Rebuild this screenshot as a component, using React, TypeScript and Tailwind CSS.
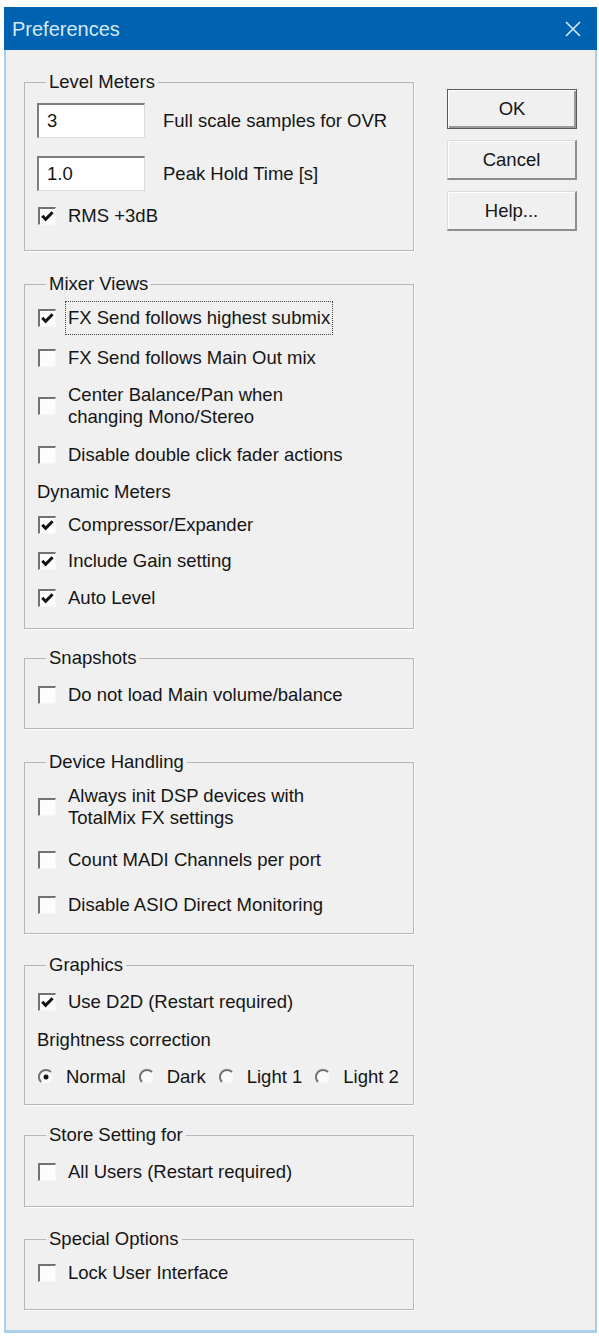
import React from "react";
import clsx from "clsx";

function CheckBox({ checked }: { checked?: boolean }) {
  return (
    <span className="relative inline-block w-[18px] h-[18px] shrink-0 border-t-2 border-l-2 border-t-[#727272] border-l-[#727272] border-r border-b border-r-[#f6f6f6] border-b-[#f6f6f6] bg-[#fcfcfc]">
      {checked && (
        <svg viewBox="0 0 15 15" className="absolute inset-0 w-full h-full">
          <path d="M2.3 6.8 L5.6 10.4 L12.6 3.2" stroke="#111" strokeWidth="3" fill="none" />
        </svg>
      )}
    </span>
  );
}

function Check({
  label,
  checked,
  focus,
  className,
}: {
  label: React.ReactNode;
  checked?: boolean;
  focus?: boolean;
  className?: string;
}) {
  return (
    <div className={clsx("flex items-center gap-[12px] pl-[1px] h-[32px]", className)}>
      <CheckBox checked={checked} />
      <span className={clsx(focus && "outline-1 outline-dotted outline-[#444] outline-offset-[2px]")}>{label}</span>
    </div>
  );
}

function Radio({ label, selected }: { label: string; selected?: boolean }) {
  return (
    <div className="flex items-center gap-[11px]">
      <svg width="18" height="18" viewBox="0 0 18 18" className="shrink-0">
        <circle cx="9" cy="9" r="6.5" fill="#fafafa" />
        <path d="M14 4 A7 7 0 0 0 4 14" stroke="#727272" strokeWidth="2" fill="none" />
        {selected && <circle cx="9" cy="9" r="2.5" fill="#111" />}
      </svg>
      <span>{label}</span>
    </div>
  );
}

function Group({
  title,
  className,
  children,
}: {
  title: string;
  className?: string;
  children: React.ReactNode;
}) {
  return (
    <fieldset className={clsx("border border-[#b6b6b6] pl-[12px] pr-[8px] shadow-[1px_1px_0_#ffffff]", className)}>
      <legend className="ml-[9px] px-[3px] leading-[22px]">{title}</legend>
      {children}
    </fieldset>
  );
}

function Field({ value, label, className }: { value: string; label: string; className?: string }) {
  return (
    <div className={clsx("flex items-center gap-[18px]", className)}>
      <div className="w-[108px] h-[35px] flex items-center pl-[8px] bg-white border-t-2 border-l-2 border-t-[#7d7d7d] border-l-[#7d7d7d] border-r border-b border-r-[#dadada] border-b-[#dadada]">
        {value}
      </div>
      <span>{label}</span>
    </div>
  );
}

function Button({ children, primary }: { children: React.ReactNode; primary?: boolean }) {
  return (
    <button
      className={clsx(
        "w-[130px] h-[40px] bg-[#f0f0f0] flex items-center justify-center",
        primary
          ? "border border-[#5a5a5a] shadow-[inset_1px_1px_0_#ffffff,inset_-2px_-2px_0_#9a9a9a]"
          : "border-t border-l border-t-[#dcdcdc] border-l-[#dcdcdc] border-r-2 border-b-2 border-r-[#8d8d8d] border-b-[#8d8d8d] shadow-[inset_1px_1px_0_#ffffff]"
      )}
    >
      {children}
    </button>
  );
}

export default function App() {
  return (
    <div className="w-[599px] h-[1337px] bg-white pt-[7px] pl-[4px] font-['Liberation_Sans',Arial,sans-serif] text-[18.5px] text-[#151515]">
      <div className="w-[593px] flex flex-col">
        {/* title bar */}
        <div className="h-[43px] bg-[#0063b1] flex items-center justify-between pl-[8px] pr-[16px]">
          <span className="text-[20px] text-[#d4e9f8]">Preferences</span>
          <svg width="16" height="16" viewBox="0 0 16 16">
            <path d="M1 1 L15 15 M15 1 L1 15" stroke="#d4e9f8" strokeWidth="1.6" />
          </svg>
        </div>

        {/* body */}
        <div className="bg-[#f0f0f0] border-x-2 border-b-[3px] border-[#a9cfea] flex pl-[18px] pt-[21px] pb-[20px]">
          <div className="w-[390px] flex flex-col">
            <Group title="Level Meters" className="pb-[18px]">
              <Field value="3" label="Full scale samples for OVR" className="mt-[10px]" />
              <Field value="1.0" label="Peak Hold Time [s]" className="mt-[18px]" />
              <Check label="RMS +3dB" checked className="mt-[9px]" />
            </Group>

            <Group title="Mixer Views" className="mt-[22px] pb-[14px]">
              <Check label="FX Send follows highest submix" checked focus className="mt-[7px]" />
              <Check label="FX Send follows Main Out mix" className="mt-[8px]" />
              <Check
                label={
                  <span className="block leading-[22px]">
                    Center Balance/Pan when
                    <br />
                    changing Mono/Stereo
                  </span>
                }
                className="mt-[10px] h-[44px]"
              />
              <Check label="Disable double click fader actions" className="mt-[11px]" />
              <div className="mt-[5px] h-[32px] flex items-center">Dynamic Meters</div>
              <Check label="Compressor/Expander" checked className="mt-[1px]" />
              <Check label="Include Gain setting" checked className="mt-[4px]" />
              <Check label="Auto Level" checked className="mt-[5px]" />
            </Group>

            <Group title="Snapshots" className="mt-[18px] pb-[17px]">
              <Check label="Do not load Main volume/balance" className="mt-[10px]" />
            </Group>

            <Group title="Device Handling" className="mt-[22px] pb-[12px]">
              <Check
                label={
                  <span className="block leading-[22px]">
                    Always init DSP devices with
                    <br />
                    TotalMix FX settings
                  </span>
                }
                className="mt-[12px] h-[44px]"
              />
              <Check label="Count MADI Channels per port" className="mt-[15px]" />
              <Check label="Disable ASIO Direct Monitoring" className="mt-[13px]" />
            </Group>

            <Group title="Graphics" className="mt-[20px] pb-[11px]">
              <Check label="Use D2D (Restart required)" checked className="mt-[10px]" />
              <div className="mt-[6px] h-[32px] flex items-center">Brightness correction</div>
              <div className="mt-[5px] h-[32px] flex items-center gap-[12px]">
                <Radio label="Normal" selected />
                <Radio label="Dark" />
                <Radio label="Light 1" />
                <Radio label="Light 2" />
              </div>
            </Group>

            <Group title="Store Setting for" className="mt-[19px] pb-[18px]">
              <Check label="All Users (Restart required)" className="mt-[10px]" />
            </Group>

            <Group title="Special Options" className="mt-[21px] pb-[20px]">
              <Check label="Lock User Interface" className="mt-[7px]" />
            </Group>
          </div>

          <div className="ml-[33px] pt-[18px] flex flex-col gap-[11px]">
            <Button primary>OK</Button>
            <Button>Cancel</Button>
            <Button>Help...</Button>
          </div>
        </div>
      </div>
    </div>
  );
}
